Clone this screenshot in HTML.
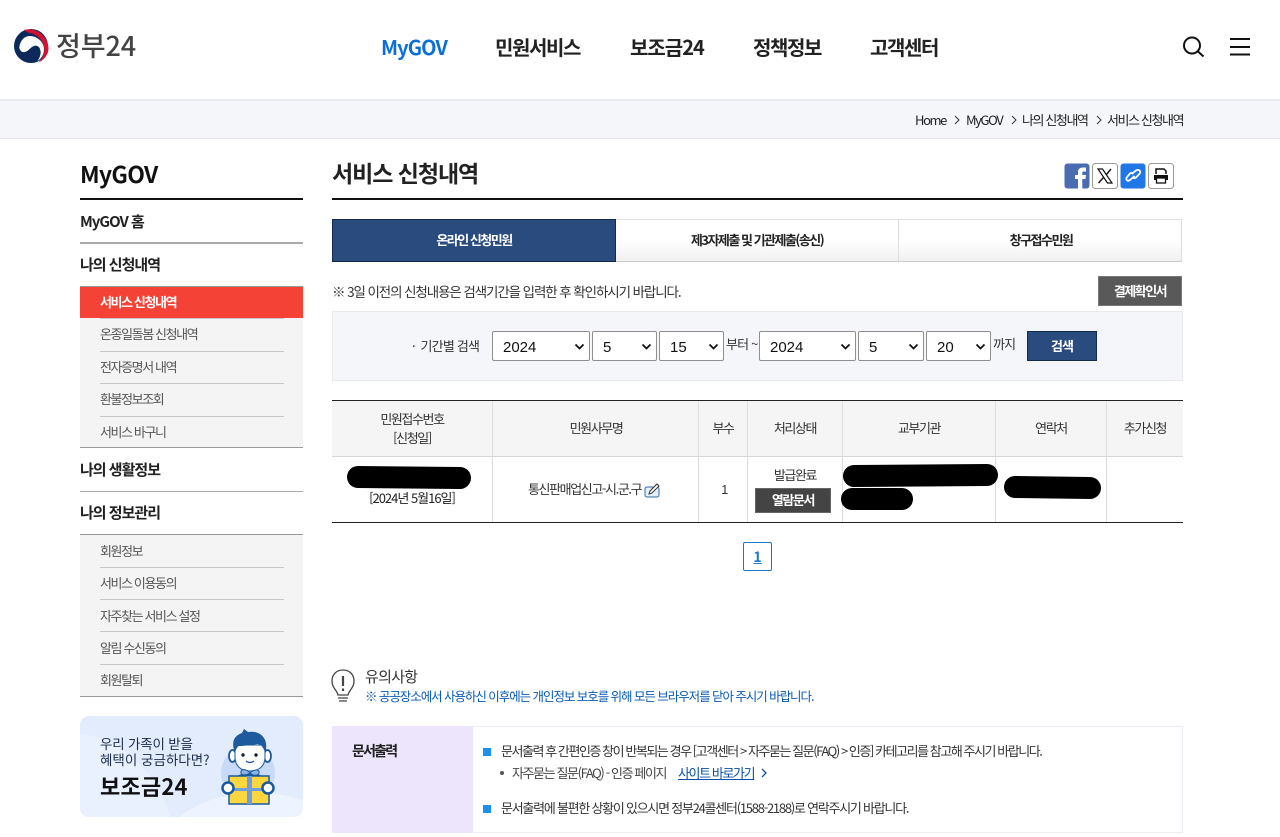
<!DOCTYPE html>
<html lang="ko"><head><meta charset="utf-8"><title>서비스 신청내역</title>
<style>
*{box-sizing:border-box}
html,body{margin:0;padding:0;background:#fff;width:1280px;height:837px;overflow:hidden}
body{position:relative;font-family:"Liberation Sans","Noto Sans CJK KR",sans-serif;color:#222}
.t{position:absolute;white-space:nowrap;font-family:"Noto Sans CJK KR","Liberation Sans",sans-serif;font-size:13px;letter-spacing:-1.4px;line-height:20px;color:#333}
.c{transform:translateX(-50%)}
.b{position:absolute}
.nav{font-size:20px;font-weight:700;letter-spacing:-1.4px;color:#222;line-height:30px;top:32px}
.side{font-size:15px;font-weight:700;color:#222;letter-spacing:-1px}
.sub{font-size:13px;color:#555;left:100px;letter-spacing:-1.4px}
.hr{position:absolute;left:100px;width:184px;height:1px;background:#c8c8c8}
.sel{position:absolute;top:331px;height:30px;background:#fff;border:1px solid #8f8f8f;border-radius:2px;font:15px "Liberation Sans",sans-serif;color:#111;line-height:31px;padding-left:10px}
.sel svg{position:absolute;right:4px;top:11px}
.v{position:absolute;width:1px;background:#ddd}
</style></head><body>

<!-- header -->
<svg class="b" style="left:13px;top:28px" width="38" height="36" viewBox="0 0 38 36">
<circle cx="18" cy="18" r="17" fill="#0b2a5b"/>
<path d="M11 2C23 -1 35 8 35.500 20C35.800 26 31.500 31.500 25.500 34.500C29.500 30 31.500 26 31.300 20.500C31 13 24 6 17 5C15 4.700 13 3.500 11 2Z" fill="#d9112f"/>
<path d="M6.300 19.700C7 13 11 8 17 8C24 8 31 14 31 21C31 26 29 30 24.500 33C27 29 28 26 27.500 23C27 19 24.500 17.500 22 17.700C18 18 16 23 12 24C9 24.500 7 23 6.300 19.700Z" fill="#fff"/>
</svg>
<div class="t" style="left:56px;top:25px;font-size:27px;line-height:40px;letter-spacing:-.1px;color:#444;font-weight:500">정부24</div>

<div class="t nav" style="left:381px;color:#0b6fd9;letter-spacing:-.9px">MyGOV</div>
<div class="t nav" style="left:495px">민원서비스</div>
<div class="t nav" style="left:630px;letter-spacing:-1px">보조금24</div>
<div class="t nav" style="left:753px">정책정보</div>
<div class="t nav" style="left:870px">고객센터</div>

<svg class="b" style="left:1182px;top:36px" width="24" height="22" viewBox="0 0 24 22" fill="none" stroke="#111" stroke-width="2"><circle cx="10" cy="9.500" r="8"/><path d="M16 15.500L21.500 20.500"/></svg>
<svg class="b" style="left:1230px;top:37px" width="20" height="19" viewBox="0 0 20 19" stroke="#111" stroke-width="2"><path d="M0 2H20M0 10H20M0 17.500H20"/></svg>

<!-- breadcrumb -->
<div class="b" style="left:0;top:99px;width:1280px;height:40px;background:#f4f6fa;border-top:2px solid #e8ebf0;border-bottom:1px solid #e6e6e6"></div>
<div class="t" style="left:915px;top:110px;color:#222">Home</div>
<div class="t" style="left:966px;top:110px;color:#222">MyGOV</div>
<div class="t" style="left:1022px;top:110px;color:#222">나의 신청내역</div>
<div class="t" style="left:1107px;top:110px;color:#222">서비스 신청내역</div>
<svg class="b" style="left:953px;top:115px" width="8" height="10" fill="none" stroke="#333"><path d="M2 1L6 5L2 9"/></svg>
<svg class="b" style="left:1010px;top:115px" width="8" height="10" fill="none" stroke="#333"><path d="M2 1L6 5L2 9"/></svg>
<svg class="b" style="left:1095px;top:115px" width="8" height="10" fill="none" stroke="#333"><path d="M2 1L6 5L2 9"/></svg>

<!-- sidebar -->
<div class="t" style="left:80px;top:155px;font-size:23px;line-height:36px;font-weight:700;color:#111;letter-spacing:-.7px">MyGOV</div>
<div class="b" style="left:80px;top:198px;width:223px;height:2px;background:#111"></div>
<div class="t side" style="left:80px;top:212px">MyGOV 홈</div>
<div class="b" style="left:80px;top:242px;width:223px;height:2px;background:#aaa"></div>
<div class="t side" style="left:80px;top:255px">나의 신청내역</div>
<div class="b" style="left:80px;top:286px;width:223px;height:161px;background:#f4f4f4;border-top:1px solid #999"></div>
<div class="b" style="left:80px;top:287px;width:223px;height:31px;background:#f44336"></div>
<div class="t sub" style="top:292px;color:#fff;font-weight:700">서비스 신청내역</div>
<div class="hr" style="top:318px"></div>
<div class="t sub" style="top:324px">온종일돌봄 신청내역</div>
<div class="hr" style="top:351px"></div>
<div class="t sub" style="top:357px">전자증명서 내역</div>
<div class="hr" style="top:383px"></div>
<div class="t sub" style="top:389px">환불정보조회</div>
<div class="hr" style="top:416px"></div>
<div class="t sub" style="top:422px">서비스 바구니</div>
<div class="b" style="left:80px;top:447px;width:223px;height:1px;background:#999"></div>
<div class="t side" style="left:80px;top:460px">나의 생활정보</div>
<div class="b" style="left:80px;top:491px;width:223px;height:1px;background:#aaa"></div>
<div class="t side" style="left:80px;top:503px">나의 정보관리</div>
<div class="b" style="left:80px;top:534px;width:223px;height:163px;background:#f4f4f4;border-top:1px solid #999;border-bottom:1px solid #999"></div>
<div class="t sub" style="top:541px">회원정보</div>
<div class="hr" style="top:567px"></div>
<div class="t sub" style="top:573px">서비스 이용동의</div>
<div class="hr" style="top:599px"></div>
<div class="t sub" style="top:606px">자주찾는 서비스 설정</div>
<div class="hr" style="top:631px"></div>
<div class="t sub" style="top:638px">알림 수신동의</div>
<div class="hr" style="top:664px"></div>
<div class="t sub" style="top:670px">회원탈퇴</div>

<!-- banner -->
<div class="b" style="left:80px;top:716px;width:223px;height:101px;border-radius:9px;background:#e3ecfd;overflow:hidden">
<svg width="223" height="101" style="position:absolute;left:0;top:0"><path d="M100 101C130 75 190 70 223 85V101Z" fill="#eef4ff"/><path d="M0 18C40 20 80 60 90 101H0Z" fill="#e9f0fe"/></svg>
</div>
<div class="t" style="left:100px;top:733px;font-size:13.500px;letter-spacing:-.2px;color:#1c2b4a;line-height:20px">우리 가족이 받을</div>
<div class="t" style="left:100px;top:749px;font-size:13.500px;letter-spacing:0;color:#1c2b4a;line-height:20px">혜택이 궁금하다면?</div>
<div class="t" style="left:100px;top:770px;font-size:22px;font-weight:700;letter-spacing:.2px;color:#111;line-height:32px">보조금24</div>
<svg class="b" style="left:215px;top:725px" width="70" height="85" viewBox="0 0 70 85">
<circle cx="33" cy="48" r="27" fill="#c9daf8"/>
<ellipse cx="17.500" cy="31" rx="3.500" ry="6" fill="#fff" stroke="#1a5a9c" stroke-width="1.800"/>
<ellipse cx="52.500" cy="31" rx="3.500" ry="6" fill="#fff" stroke="#1a5a9c" stroke-width="1.800"/>
<path d="M20 20H50V32C50 42 43 46 35 46C27 46 20 42 20 32Z" fill="#fff" stroke="#1a5a9c"/>
<path d="M20 28C15 15 21 10 27 8L29 4L33 7C44 5 55 13 50 28C49 23 46 19 42 19C36 20 28 21 24 21C22 22 21 24 20 28Z" fill="#1d5a9e"/>
<circle cx="28" cy="30" r="1.700" fill="#123"/><circle cx="41" cy="30" r="1.700" fill="#123"/>
<path d="M31 36Q35 39 39 36" stroke="#1a5a9c" stroke-width="1.200" fill="none"/>
<path d="M18 53Q34 43 51 53Z" fill="#1a5a9c"/>
<path d="M35 48C31 43 25 44 26 48C27 51 32 50 35 48C39 44 45 44 44 48C43 51 38 51 35 48Z" fill="#8eb2e6" stroke="#1a5a9c"/>
<rect x="14" y="51" width="40" height="28" fill="#fbd63f" stroke="#1a5a9c" stroke-width="1.500"/>
<rect x="32" y="51" width="5" height="28" fill="#6f9ddf"/><rect x="14" y="63" width="40" height="3" fill="#6f9ddf"/>
<circle cx="13" cy="63" r="5.500" fill="#fff" stroke="#1a5a9c" stroke-width="2.500"/><circle cx="53" cy="63" r="5.500" fill="#fff" stroke="#1a5a9c" stroke-width="2.500"/>
</svg>

<!-- title -->
<div class="t" style="left:332px;top:154px;font-size:23px;line-height:36px;font-weight:700;letter-spacing:-1.05px;color:#222">서비스 신청내역</div>
<div class="b" style="left:332px;top:198px;width:851px;height:2px;background:#111"></div>

<!-- share -->
<svg class="b" style="left:1064px;top:163px" width="110" height="27" viewBox="0 0 110 27">
<rect x=".5" y=".5" width="25" height="25" rx="3" fill="#4a6cb0"/><path d="M14 26V16H11V12H14V9C14 6 16 4.500 19 4.500H22V8.500H20C18.500 8.500 18.300 9 18.300 10V12H22L21.400 16H18.300V26Z" fill="#fff"/>
<rect x="28.500" y=".5" width="25" height="25" rx="3" fill="#fff" stroke="#999"/><path d="M34 6H38.500L48 20H43.500Z" fill="none" stroke="#111" stroke-width="1.200"/><path d="M47 6L42 12M39.500 14.500L34.500 20" stroke="#111" stroke-width="1.400"/>
<rect x="56.500" y=".5" width="25" height="25" rx="3" fill="#1f78e5"/><g fill="none" stroke="#fff" stroke-width="1.800"><path d="M67.500 11L72 7.500C73.500 6.500 75 6.800 75.800 7.800C76.500 9 76.300 10 75.300 11L72 14.500C71 15.300 69.800 15.300 69 14.700"/><path d="M70.500 13L66 17C64.700 18 63.500 18 62.700 17C62 16 62.200 14.800 63.300 13.700L66 10.500C67 9.800 68.200 9.900 69 10.500"/></g>
<rect x="84.500" y=".5" width="25" height="25" rx="3" fill="#fff" stroke="#999"/><path d="M92 11V6H100L102 8V11" fill="none" stroke="#111" stroke-width="1.500"/><path d="M90 12H104V17H90Z" fill="#111"/><rect x="92.500" y="15" width="9" height="5" fill="#fff" stroke="#111" stroke-width="1.300"/>
</svg>

<!-- tabs -->
<div class="b" style="left:332px;top:219px;width:850px;height:43px;background:linear-gradient(#fff 50%,#f0f0f0);border:1px solid #ddd;border-bottom:1px solid #ccc"></div>
<div class="v" style="left:898px;top:220px;height:41px"></div>
<div class="b" style="left:332px;top:219px;width:284px;height:43px;background:#2a4b7e;border:1px solid #14294e"></div>
<div class="t c" style="left:474px;top:230px;color:#fff;font-weight:700;letter-spacing:-1.5px">온라인 신청민원</div>
<div class="t c" style="left:757px;top:230px;color:#222;font-weight:700;letter-spacing:-1.5px">제3자제출 및 기관제출(송신)</div>
<div class="t c" style="left:1041px;top:230px;color:#222;font-weight:700;letter-spacing:-1.5px">창구접수민원</div>

<div class="t" style="left:332px;top:281px;font-size:13.500px;letter-spacing:-1.1px;color:#333">※ 3일 이전의 신청내용은 검색기간을 입력한 후 확인하시기 바랍니다.</div>
<div class="b" style="left:1098px;top:276px;width:84px;height:30px;background:#595959;border:1px solid #777"></div>
<div class="t c" style="left:1140px;top:281px;color:#fff;font-weight:700;letter-spacing:-1.5px">결제확인서</div>

<!-- search -->
<div class="b" style="left:332px;top:311px;width:851px;height:70px;background:#f5f6f9;border:1px solid #e9e9e9"></div>
<div class="t" style="left:412px;top:336px;color:#333;letter-spacing:-.8px">·&nbsp;&nbsp;기간별 검색</div>
<div class="sel" style="left:492px;width:98px">2024<svg width="11" height="8" fill="none" stroke="#111" stroke-width="1.800"><path d="M1.500 1.500L5.500 5.500L9.500 1.500"/></svg></div>
<div class="sel" style="left:592px;width:65px">5<svg width="11" height="8" fill="none" stroke="#111" stroke-width="1.800"><path d="M1.500 1.500L5.500 5.500L9.500 1.500"/></svg></div>
<div class="sel" style="left:659px;width:65px">15<svg width="11" height="8" fill="none" stroke="#111" stroke-width="1.800"><path d="M1.500 1.500L5.500 5.500L9.500 1.500"/></svg></div>
<div class="t" style="left:726px;top:334px;color:#333;letter-spacing:-.8px">부터 ~</div>
<div class="sel" style="left:759px;width:97px">2024<svg width="11" height="8" fill="none" stroke="#111" stroke-width="1.800"><path d="M1.500 1.500L5.500 5.500L9.500 1.500"/></svg></div>
<div class="sel" style="left:858px;width:66px">5<svg width="11" height="8" fill="none" stroke="#111" stroke-width="1.800"><path d="M1.500 1.500L5.500 5.500L9.500 1.500"/></svg></div>
<div class="sel" style="left:926px;width:65px">20<svg width="11" height="8" fill="none" stroke="#111" stroke-width="1.800"><path d="M1.500 1.500L5.500 5.500L9.500 1.500"/></svg></div>
<div class="t" style="left:993px;top:334px;color:#333;letter-spacing:-.8px">까지</div>
<div class="b" style="left:1027px;top:331px;width:70px;height:30px;background:#2a4b7e;border:1px solid #14294e"></div>
<div class="t c" style="left:1062px;top:336px;color:#fff;font-weight:700;letter-spacing:-1px">검색</div>

<!-- table -->
<div class="b" style="left:332px;top:400px;width:851px;height:1px;background:#222"></div>
<div class="b" style="left:332px;top:401px;width:851px;height:55px;background:#f5f5f5"></div>
<div class="b" style="left:332px;top:456px;width:851px;height:1px;background:#d6d6d6"></div>
<div class="b" style="left:332px;top:522px;width:851px;height:1px;background:#222"></div>
<div class="v" style="left:492px;top:401px;height:121px"></div>
<div class="v" style="left:698px;top:401px;height:121px"></div>
<div class="v" style="left:747px;top:401px;height:121px"></div>
<div class="v" style="left:842px;top:401px;height:121px"></div>
<div class="v" style="left:995px;top:401px;height:121px"></div>
<div class="v" style="left:1106px;top:401px;height:121px"></div>
<div class="t c" style="left:412px;top:409px">민원접수번호</div>
<div class="t c" style="left:412px;top:428px">[신청일]</div>
<div class="t c" style="left:596px;top:418px">민원사무명</div>
<div class="t c" style="left:723px;top:418px">부수</div>
<div class="t c" style="left:795px;top:418px">처리상태</div>
<div class="t c" style="left:919px;top:418px">교부기관</div>
<div class="t c" style="left:1051px;top:418px">연락처</div>
<div class="t c" style="left:1145px;top:418px">추가신청</div>
<div class="t c" style="left:412px;top:488px;color:#222;letter-spacing:-1px">[2024년 5월16일]</div>
<div class="t" style="left:528px;top:479px">통신판매업신고-시.군.구</div>
<svg class="b" style="left:644px;top:482px" width="17" height="16" viewBox="0 0 17 16" fill="none" stroke="#2f6aa5"><rect x="1" y="5" width="14" height="10" rx="2" fill="#e3effa"/><path d="M6 9L13 2L15 4L8 11L5 12Z" fill="#fff" stroke="#333"/></svg>
<div class="t c" style="left:724px;top:480px;font-family:'Liberation Sans',sans-serif">1</div>
<div class="t c" style="left:795px;top:465px">발급완료</div>
<div class="b" style="left:755px;top:488px;width:76px;height:25px;background:#444;border:1px solid #666"></div>
<div class="t c" style="left:793px;top:490px;color:#fff;font-weight:700">열람문서</div>
<svg class="b" style="left:340px;top:460px" width="770" height="55"><g stroke="#000" stroke-linecap="round" fill="none"><path d="M18 17L120 18" stroke-width="22"/><path d="M514 16L647 15" stroke-width="22"/><path d="M512 39L562 39" stroke-width="22"/><path d="M675 27L750 28" stroke-width="22"/></g></svg>

<!-- pagination -->
<div class="b" style="left:743px;top:542px;width:29px;height:29px;border:1px solid #1f78c8;border-radius:2px"></div>
<div class="t c" style="left:757.500px;top:547px;font-weight:700;color:#1f78c8;text-decoration:underline;letter-spacing:0;font-size:14px">1</div>

<!-- notice -->
<svg class="b" style="left:331px;top:669px" width="24" height="36" viewBox="0 0 24 36" fill="none" stroke="#444" stroke-width="1.300"><path d="M7 26C6 21 1 19 1 12C1 5 6 1 12 1C18 1 23 5 23 12C23 19 18 21 17 26Z"/><path d="M7 29H17M8 32H16"/><path d="M12 7V17" stroke-width="2.200"/><path d="M12 19.500V22" stroke-width="2.200"/></svg>
<div class="t" style="left:365px;top:667px;font-size:15px;letter-spacing:-.7px;color:#333">유의사항</div>
<div class="t" style="left:365px;top:686px;font-size:12.500px;letter-spacing:-1.05px;color:#0a5bb5">※ 공공장소에서 사용하신 이후에는 개인정보 보호를 위해 모든 브라우저를 닫아 주시기 바랍니다.</div>
<div class="b" style="left:332px;top:726px;width:851px;height:107px;background:#fff;border:1px solid #ececf4"></div>
<div class="b" style="left:332px;top:726px;width:141px;height:107px;background:#ede5fb"></div>
<div class="t" style="left:352px;top:741px;font-weight:700;font-size:14px;letter-spacing:-1.8px;color:#222">문서출력</div>
<div class="b" style="left:483px;top:748px;width:8px;height:8px;background:#1c8fef"></div>
<div class="t" style="left:501px;top:741px;letter-spacing:-1.45px;color:#333">문서출력 후 간편인증 창이 반복되는 경우 [고객센터 &gt; 자주묻는 질문(FAQ) &gt; 인증] 카테고리를 참고해 주시기 바랍니다.</div>
<div class="b" style="left:500px;top:771px;width:4px;height:4px;border-radius:50%;background:#555"></div>
<div class="t" style="left:512px;top:763px;color:#444">자주묻는 질문(FAQ) - 인증 페이지</div>
<div class="t" style="left:678px;top:763px;color:#0a4fa5;text-decoration:underline">사이트 바로가기</div>
<svg class="b" style="left:760px;top:768px" width="8" height="10" fill="none" stroke="#0a4fa5" stroke-width="1.300"><path d="M2 1L6 5L2 9"/></svg>
<div class="b" style="left:483px;top:805px;width:8px;height:8px;background:#1c8fef"></div>
<div class="t" style="left:501px;top:798px;letter-spacing:-1.25px;color:#333">문서출력에 불편한 상황이 있으시면 정부24콜센터(1588-2188)로 연락주시기 바랍니다.</div>
</body></html>
